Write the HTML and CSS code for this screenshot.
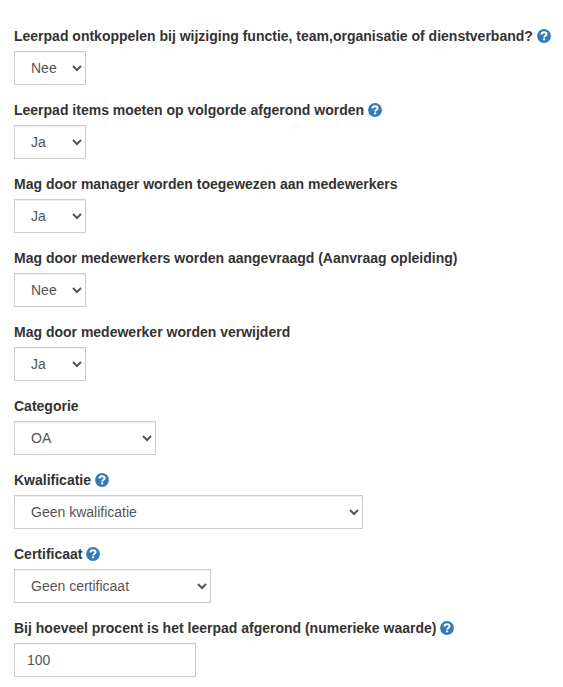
FILE: index.html
```html
<!DOCTYPE html>
<html lang="nl">
<head>
    <meta charset="UTF-8">
    <meta name="viewport" content="width=device-width, initial-scale=1.0">
    <title>Leerpad</title>
    <link rel="stylesheet" href="styles.css">
</head>
<body>
    <svg class="sprite" width="0" height="0">
        <symbol id="help" viewBox="0 0 14 14">
            <circle cx="7" cy="7" r="6.9" fill="#337ab7"/>
            <path d="M4.5 5.5C4.5 3.9 5.5 3.2 7 3.2s2.6.7 2.6 2C9.6 6.8 7.2 6.8 7.2 8.6" fill="none" stroke="#fff" stroke-width="2"/>
            <rect x="6.1" y="9.4" width="2.1" height="1.9" fill="#fff"/>
        </symbol>
    </svg>
    <form class="leerpad-form">
        <div class="form-group">
            <label for="ontkoppelen">Leerpad ontkoppelen bij wijziging functie, team,organisatie of dienstverband? <svg class="help"><use href="#help"/></svg></label>
            <select id="ontkoppelen" class="form-control small">
                <option>Ja</option>
                <option selected>Nee</option>
            </select>
        </div>
        <div class="form-group">
            <label for="volgorde">Leerpad items moeten op volgorde afgerond worden <svg class="help"><use href="#help"/></svg></label>
            <select id="volgorde" class="form-control small">
                <option selected>Ja</option>
                <option>Nee</option>
            </select>
        </div>
        <div class="form-group">
            <label for="manager">Mag door manager worden toegewezen aan medewerkers</label>
            <select id="manager" class="form-control small">
                <option selected>Ja</option>
                <option>Nee</option>
            </select>
        </div>
        <div class="form-group">
            <label for="aanvraag">Mag door medewerkers worden aangevraagd (Aanvraag opleiding)</label>
            <select id="aanvraag" class="form-control small">
                <option>Ja</option>
                <option selected>Nee</option>
            </select>
        </div>
        <div class="form-group">
            <label for="verwijderd">Mag door medewerker worden verwijderd</label>
            <select id="verwijderd" class="form-control small">
                <option selected>Ja</option>
                <option>Nee</option>
            </select>
        </div>
        <div class="form-group">
            <label for="categorie">Categorie</label>
            <select id="categorie" class="form-control categorie">
                <option>OA</option>
            </select>
        </div>
        <div class="form-group">
            <label for="kwalificatie">Kwalificatie <svg class="help"><use href="#help"/></svg></label>
            <select id="kwalificatie" class="form-control kwalificatie">
                <option>Geen kwalificatie</option>
            </select>
        </div>
        <div class="form-group">
            <label for="certificaat">Certificaat <svg class="help"><use href="#help"/></svg></label>
            <select id="certificaat" class="form-control certificaat">
                <option>Geen certificaat</option>
            </select>
        </div>
        <div class="form-group">
            <label for="procent">Bij hoeveel procent is het leerpad afgerond (numerieke waarde) <svg class="help"><use href="#help"/></svg></label>
            <input type="text" id="procent" class="form-control procent" value="100">
        </div>
    </form>
</body>
</html>
```

FILE: styles.css
```css
* {
    box-sizing: border-box;
}
body {
    margin: 0;
    background: #fff;
    color: #333;
    font-family: "Liberation Sans", Arial, sans-serif;
    font-size: 14px;
    line-height: 20px;
}
.sprite {
    display: block;
}
.leerpad-form {
    padding: 26px 0 0 14px;
}
.form-group {
    height: 59px;
    margin-bottom: 15px;
}
label {
    display: block;
    margin-bottom: 5px;
    font-weight: bold;
    white-space: nowrap;
}
.help {
    width: 14px;
    height: 14px;
    vertical-align: -2px;
}
.form-control {
    display: block;
    height: 34px;
    padding: 6px 12px;
    border: 1px solid #ccc;
    border-radius: 0;
    background-color: #fff;
    box-shadow: inset 0 1px 1px rgba(0, 0, 0, 0.075);
    color: #555;
    font: inherit;
}
.small {
    width: 72px;
}
.categorie {
    width: 142px;
}
.kwalificatie {
    width: 349px;
}
.certificaat {
    width: 197px;
}
.procent {
    width: 182px;
}
```
